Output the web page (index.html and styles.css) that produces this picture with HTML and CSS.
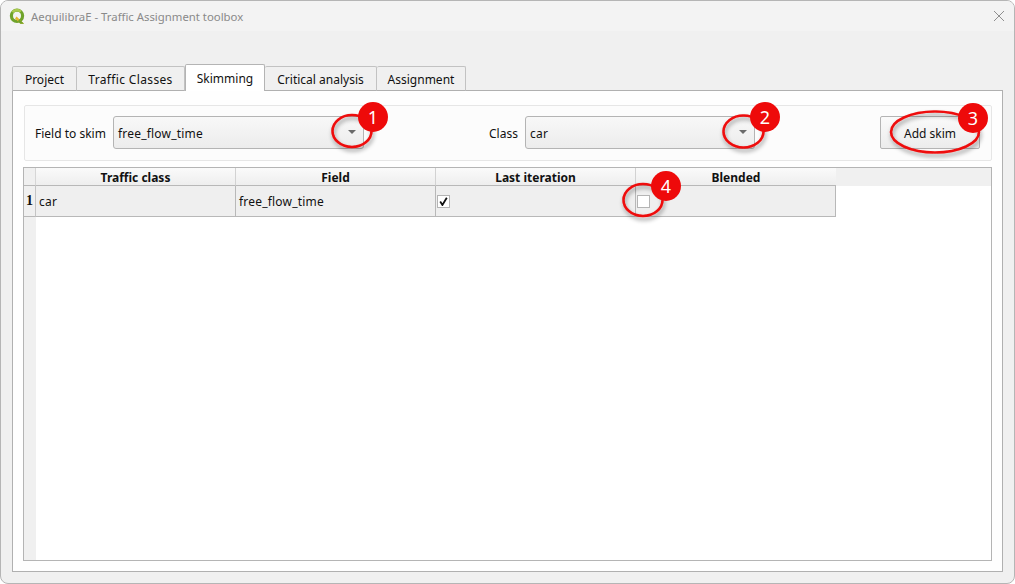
FILE: index.html
```html
<!DOCTYPE html>
<html lang="en">
<head>
<meta charset="utf-8">
<title>AequilibraE - Traffic Assignment toolbox</title>
<link rel="stylesheet" href="styles.css">
</head>
<body>
<div class="window">
  <header class="titlebar">
    <svg class="logo" width="17" height="17" viewBox="0 0 17 17" aria-hidden="true">
      <circle cx="8" cy="7.8" r="5.6" fill="none" stroke="#6fa32b" stroke-width="3.2"/>
      <path d="M3.6 4.2A5.6 5.6 0 0 1 11.8 3.6" fill="none" stroke="#a9c94f" stroke-width="2.6"/>
      <path d="M7.6 8.4l7.4 7.4h-3.6L6 10.4z" fill="#e5b52d"/>
      <path d="M10.4 11.2l4.6 4.6h-3.6l-2.6-2.6z" fill="#6fa32b"/>
    </svg>
    <span class="title">AequilibraE - Traffic Assignment toolbox</span>
    <svg class="close" width="12" height="12" viewBox="0 0 12 12" aria-hidden="true">
      <path d="M1 1l10 10M11 1L1 11" stroke="#8f8f8f" stroke-width="1" fill="none"/>
    </svg>
  </header>
  <main class="content">
    <nav class="tabs">
      <span class="tab tab-project">Project</span>
      <span class="tab tab-classes">Traffic Classes</span>
      <span class="tab tab-active">Skimming</span>
      <span class="tab tab-critical">Critical analysis</span>
      <span class="tab tab-assign">Assignment</span>
    </nav>
    <section class="pane">
      <div class="controls">
        <span class="label label-field">Field to skim</span>
        <div class="combo combo-field"><span class="combo-text">free_flow_time</span><span class="combo-arrow"><i class="caret"></i></span></div>
        <span class="label label-class">Class</span>
        <div class="combo combo-class"><span class="combo-text">car</span><span class="combo-arrow"><i class="caret"></i></span></div>
        <button class="button" type="button">Add skim</button>
      </div>
      <div class="table">
        <div class="corner"></div>
        <div class="th">Traffic class</div>
        <div class="th">Field</div>
        <div class="th">Last iteration</div>
        <div class="th th-last">Blended</div>
        <div class="th-fill"></div>
        <div class="row-head">1</div>
        <div class="td td-text">car</div>
        <div class="td td-text">free_flow_time</div>
        <div class="td"><span class="check">
          <svg width="9" height="9" viewBox="0 0 9 9" aria-hidden="true"><path d="M1.2 4.6L3.4 8 7.8 .8" fill="none" stroke="#111" stroke-width="1.8"/></svg>
        </span></div>
        <div class="td"><span class="check"></span></div>
        <div class="rest-head"></div>
        <div class="rest"></div>
      </div>
    </section>
  </main>

  <svg class="marks" width="1015" height="584" viewBox="0 0 1015 584" aria-hidden="true">
    <defs>
      <filter id="shadow" x="-30%" y="-30%" width="160%" height="170%">
        <feDropShadow dx="1" dy="3" stdDeviation="2" flood-color="#000" flood-opacity=".4"/>
      </filter>
    </defs>
    <g fill="none" stroke="#ee0a0a" stroke-width="2.6" filter="url(#shadow)">
      <ellipse cx="352" cy="131" rx="19.5" ry="16"/>
      <ellipse cx="743.5" cy="131.5" rx="20" ry="16"/>
      <ellipse cx="935" cy="132" rx="44" ry="20.5"/>
      <ellipse cx="643" cy="200" rx="19.5" ry="16"/>
    </g>
  </svg>
  <span class="badge badge-1">1</span>
  <span class="badge badge-2">2</span>
  <span class="badge badge-3">3</span>
  <span class="badge badge-4">4</span>
</div>
</body>
</html>
```
FILE: styles.css
```css
* { box-sizing: border-box; }
html, body { margin: 0; padding: 0; }
body {
  width: 1015px;
  height: 584px;
  overflow: hidden;
  background: #fff;
  font: 12px "Noto Sans", "Open Sans", sans-serif;
  font-variant-ligatures: none;
  color: #111;
}
.window {
  position: relative;
  width: 1015px;
  height: 584px;
  display: flex;
  flex-direction: column;
  background: #f0f0f0;
  border: 1px solid #b5b5b5;
  border-radius: 8px;
  overflow: hidden;
}
.titlebar {
  height: 30px;
  flex: none;
  display: flex;
  align-items: center;
  padding: 0 9px 0 8px;
  background: #f3f3f3;
}
.logo { flex: none; margin-right: 5px; }
.title { flex: 1; color: #8a8a8a; font-size: 11.35px; }
.close { flex: none; }
.content {
  flex: 1;
  display: flex;
  flex-direction: column;
  padding: 33px 11px 11px 11px;
  min-height: 0;
}
.tabs {
  display: flex;
  align-items: flex-end;
  height: 27px;
  flex: none;
  margin-bottom: -1px;
  position: relative;
  z-index: 1;
}
.tab {
  height: 25px;
  display: flex;
  align-items: center;
  justify-content: center;
  padding-top: 2px;
  border: 1px solid #c2c2c2;
  border-left-width: 0;
  border-radius: 2px 2px 0 0;
  background: #f0f0f0;
  border-bottom-color: #b0b0b0;
}
.tab-project { width: 65px; border-left-width: 1px; }
.tab-classes { width: 108px; letter-spacing: .35px; }
.tab-active {
  width: 80px;
  height: 27px;
  background: #fff;
  border-left-width: 1px;
  border-color: #b4b4b4;
  border-bottom: 0;
  padding-top: 0;
  padding-bottom: 0;
}
.tab-critical { width: 112px; border-left-width: 0; }
.tab-assign { width: 89px; }
.pane {
  flex: 1;
  min-height: 0;
  display: flex;
  flex-direction: column;
  gap: 6px;
  padding: 14px 10px 10px 10px;
  background: #fefefe;
  border: 1px solid #b0b0b0;
}
.controls {
  flex: none;
  height: 56px;
  margin: 0 0 0 1px;
  display: flex;
  align-items: center;
  padding: 0 11px 2px 10px;
  background: #fcfcfc;
  border: 1px solid #e6e6e6;
  border-radius: 2px;
}
.label { flex: none; padding-top: 2px; }
.label-field { width: 78px; }
.label-class { width: 36px; margin-left: 125px; }
.combo {
  flex: none;
  height: 33px;
  display: flex;
  align-items: center;
  border: 1px solid #b4b4b4;
  border-radius: 3px;
  background: linear-gradient(#f8f8f8, #ececec);
}
.combo-field { width: 251px; }
.combo-class { width: 230px; }
.combo-text { flex: 1; padding: 2px 0 0 4px; letter-spacing: .2px; }
.combo-arrow {
  width: 23px;
  height: 100%;
  display: flex;
  align-items: center;
  justify-content: center;
}
.caret {
  width: 0;
  height: 0;
  border: 4px solid transparent;
  border-top: 4px solid #6a6a6a;
  border-bottom: 0;
}
.button {
  flex: none;
  width: 100px;
  height: 33px;
  margin-left: auto;
  padding: 2px 0 0;
  font: inherit;
  font-variant-ligatures: none;
  color: #111;
  border: 1px solid #b4b4b4;
  border-radius: 2px;
  background: linear-gradient(#fafafa, #ececec);
}
.table {
  flex: 1;
  min-height: 0;
  display: grid;
  grid-template-columns: 12px repeat(4, 200px) 1fr;
  grid-template-rows: 18px 31px 1fr;
  border: 1px solid #b4b4b4;
  background: #fff;
}
.corner { background: #f0f0f0; border-right: 1px solid #d6d6d6; border-bottom: 1px solid #b8b8b8; }
.th {
  display: flex;
  align-items: center;
  justify-content: center;
  padding-top: 1px;
  font-weight: 700;
  background: linear-gradient(#fafafa, #eeeeee);
  border-right: 1px solid #d2d2d2;
  border-bottom: 1px solid #b8b8b8;
}
.th-last { border-right: 0; }
.th-fill { background: #f0f0f0; }
.row-head {
  display: flex;
  align-items: center;
  justify-content: center;
  font: bold 14px "Liberation Serif", serif;
  background: #f0f0f0;
  border-right: 1px solid #c4c4c4;
  border-bottom: 1px solid #b8b8b8;
}
.td {
  display: flex;
  align-items: center;
  background: #efefef;
  border-right: 1px solid #b8b8b8;
  border-bottom: 1px solid #b8b8b8;
}
.td-text { padding-left: 3px; letter-spacing: .2px; }
.check {
  width: 13px;
  height: 13px;
  margin-left: 1px;
  display: flex;
  align-items: center;
  justify-content: center;
  background: #fff;
  border: 1px solid #b4b4b4;
}
.rest-head { background: #f0f0f0; grid-row: 3; grid-column: 1; }
.rest { grid-row: 3; grid-column: 2 / -1; background: #fff; }
.marks { position: absolute; left: -1px; top: -1px; pointer-events: none; }
.badge {
  position: absolute;
  width: 30px;
  height: 30px;
  border-radius: 50%;
  background: #ee0a0a;
  color: #fff;
  font-size: 18px;
  line-height: 30px;
  text-align: center;
}
.badge-1 { left: 357px; top: 101px; }
.badge-2 { left: 749px; top: 101px; }
.badge-3 { left: 957px; top: 102px; }
.badge-4 { left: 650px; top: 170px; }
```
